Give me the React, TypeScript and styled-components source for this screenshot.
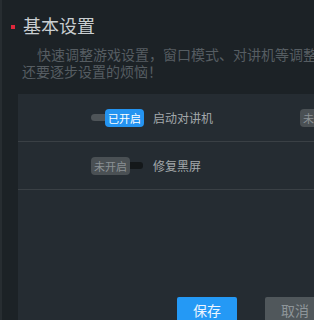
import React from "react";
import styled, { createGlobalStyle } from "styled-components";

const Global = createGlobalStyle`
  html, body {
    margin: 0;
    padding: 0;
    background: #1c2226;
    overflow: hidden;
  }
  body {
    font-family: "Microsoft YaHei", "Noto Sans CJK SC", "Noto Sans", sans-serif;
  }
`;

const Page = styled.div`
  width: 560px;
  height: 320px;
  box-sizing: border-box;
  border-left: 2px solid #272d31;
  padding-top: 13px;
  display: flex;
  flex-direction: column;
`;

const Header = styled.div`
  display: flex;
  align-items: center;
  gap: 8px;
  padding-left: 9px;
  height: 24px;
`;

const Mark = styled.span`
  width: 4px;
  height: 4px;
  background: #e0273b;
  margin-top: 3px;
`;

const Title = styled.h1`
  margin: 0;
  font-size: 18px;
  line-height: 24px;
  font-weight: normal;
  color: #c9ced1;
`;

const Desc = styled.p`
  margin: 9px 0 0 0;
  padding-left: 20px;
  font-size: 14px;
  line-height: 17px;
  color: #565d62;
  text-indent: 15px;
  white-space: nowrap;
`;

const Panel = styled.section`
  margin: 14px 0 0 16px;
  flex: 1;
  background: #252c32;
  display: flex;
  flex-direction: column;
`;

const Row = styled.div`
  height: 47px;
  border-bottom: 1px solid #3a4045;
  display: flex;
  align-items: center;
  padding-left: 73px;
`;

const Item = styled.div`
  width: 209px;
  display: flex;
  align-items: center;
  gap: 9px;
`;

const Toggle = styled.div<{ $on: boolean }>`
  width: 53px;
  height: 18px;
  display: flex;
  align-items: center;
  flex-direction: ${(p) => (p.$on ? "row" : "row-reverse")};
  justify-content: flex-end;
  cursor: pointer;
`;

const Track = styled.span<{ $on: boolean }>`
  width: ${(p) => (p.$on ? "15px" : "13px")};
  height: 7px;
  background: ${(p) => (p.$on ? "#4e5458" : "#14181a")};
  border-radius: ${(p) => (p.$on ? "4px 0 0 4px" : "0 3px 3px 0")};
  margin-right: ${(p) => (p.$on ? "-1px" : "0")};
`;

const Badge = styled.span<{ $on: boolean }>`
  width: 39px;
  height: 18px;
  border-radius: 4px;
  background: ${(p) => (p.$on ? "#2494f1" : "#4a5054")};
  color: ${(p) => (p.$on ? "#ffffff" : "#8b9195")};
  font-size: 11px;
  line-height: 18px;
  text-align: center;
  position: relative;
`;

const Label = styled.span`
  font-size: 12px;
  color: #a3a8ab;
  white-space: nowrap;
`;

const Footer = styled.div`
  margin-top: 107px;
  padding-left: 159px;
  display: flex;
  gap: 28px;
`;

const Button = styled.button<{ $primary?: boolean }>`
  width: 60px;
  height: 26px;
  border: none;
  border-radius: 2px;
  padding: 0;
  font-family: inherit;
  font-size: 14px;
  background: ${(p) => (p.$primary ? "#2499f5" : "#50575b")};
  color: ${(p) => (p.$primary ? "#eef6ff" : "#8e9599")};
`;

type Setting = { label: string; on: boolean };

const rows: Setting[][] = [
  [
    { label: "启动对讲机", on: true },
    { label: "窗口模式", on: false },
  ],
  [{ label: "修复黑屏", on: false }],
];

const Switch = ({ on }: { on: boolean }) => (
  <Toggle $on={on}>
    <Track $on={on} />
    <Badge $on={on}>{on ? "已开启" : "未开启"}</Badge>
  </Toggle>
);

export default function App() {
  return (
    <>
      <Global />
      <Page>
        <Header>
          <Mark />
          <Title>基本设置</Title>
        </Header>
        <Desc>
          快速调整游戏设置，窗口模式、对讲机等调整
          <br />
          还要逐步设置的烦恼！
        </Desc>
        <Panel>
          {rows.map((row, i) => (
            <Row key={i}>
              {row.map((s) => (
                <Item key={s.label}>
                  <Switch on={s.on} />
                  <Label>{s.label}</Label>
                </Item>
              ))}
            </Row>
          ))}
          <Footer>
            <Button $primary>保存</Button>
            <Button>取消</Button>
          </Footer>
        </Panel>
      </Page>
    </>
  );
}
